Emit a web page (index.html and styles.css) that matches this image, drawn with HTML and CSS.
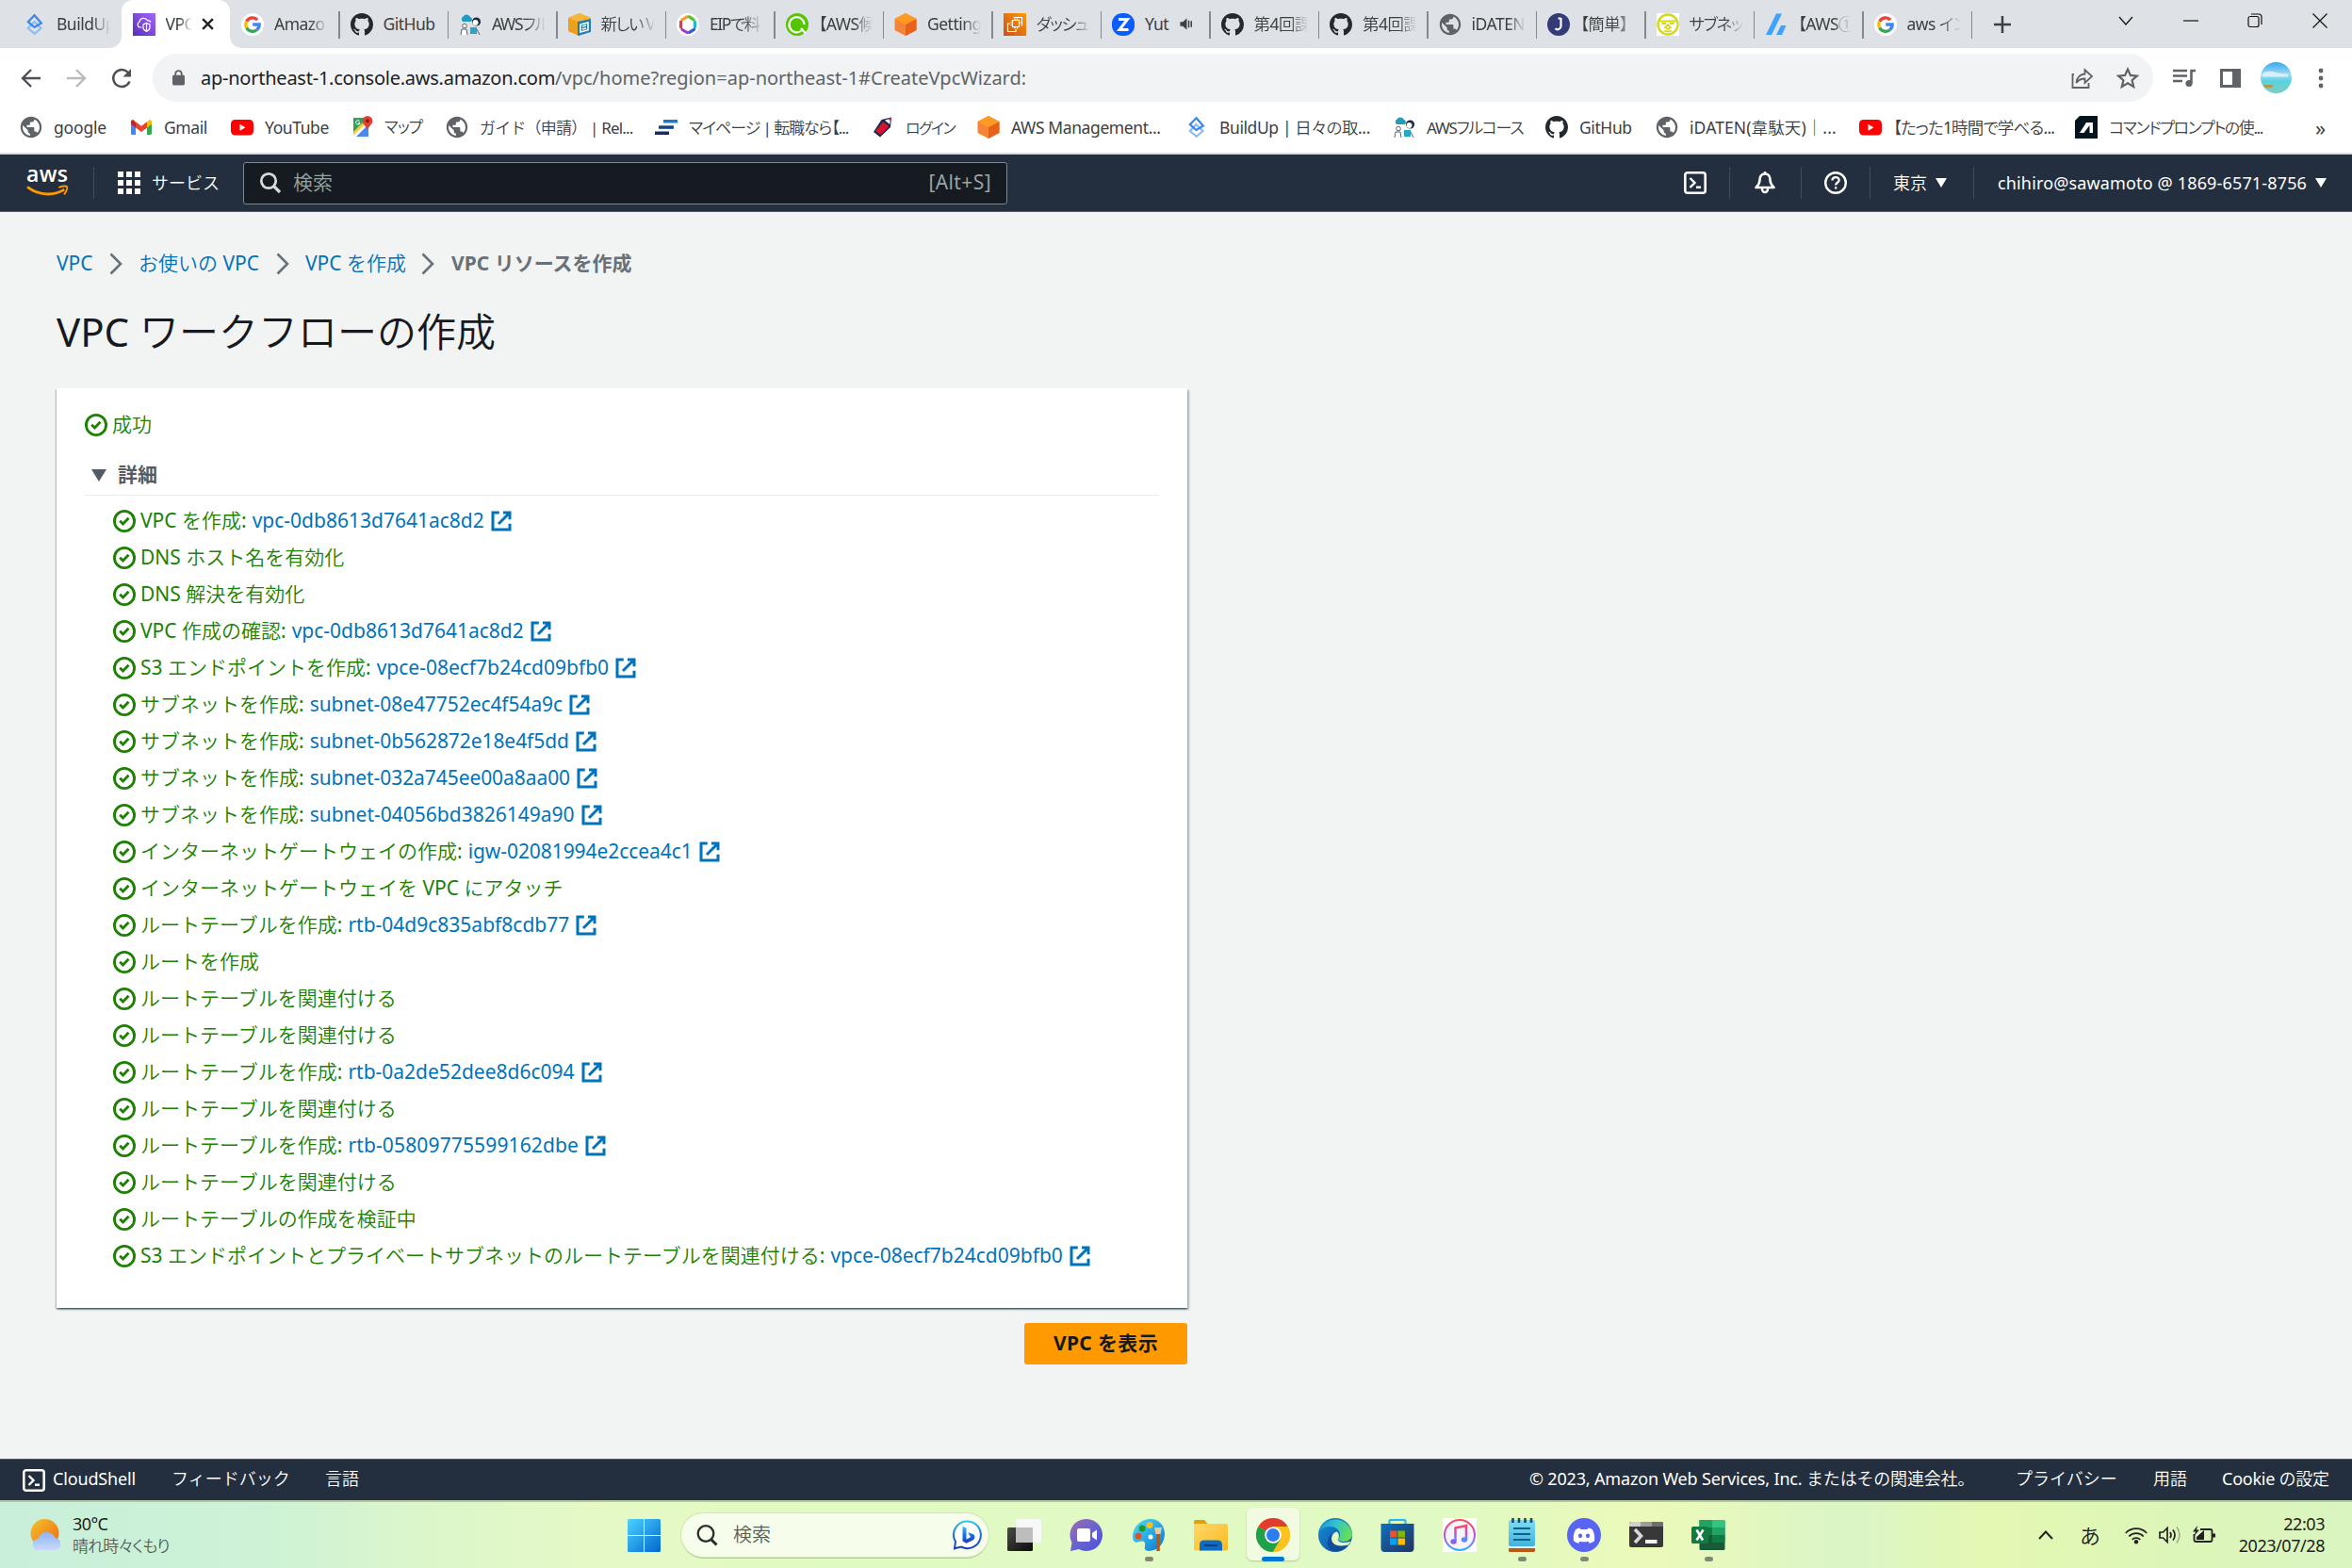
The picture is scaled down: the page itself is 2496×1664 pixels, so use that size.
FILE: index.html
```html
<!DOCTYPE html>
<html lang="ja">
<head>
<meta charset="utf-8">
<title>VPC リソースを作成</title>
<link rel="stylesheet" href="styles.css">
</head>
<body>
<svg class="defs" aria-hidden="true">
  <defs>
    <linearGradient id="gPurple" x1="0" y1="1" x2="1" y2="0"><stop offset="0" stop-color="#5a30b5"/><stop offset="1" stop-color="#a166ff"/></linearGradient>
    <linearGradient id="gOrange" x1="0" y1="1" x2="1" y2="0"><stop offset="0" stop-color="#c8511b"/><stop offset="1" stop-color="#ff9900"/></linearGradient>
    <linearGradient id="gWin" x1="0" y1="0" x2="1" y2="1"><stop offset="0" stop-color="#4ed3ff"/><stop offset="1" stop-color="#0067cf"/></linearGradient>
    <linearGradient id="gSun" x1="0" y1="0" x2="1" y2="1"><stop offset="0" stop-color="#f3c52c"/><stop offset="1" stop-color="#f2660f"/></linearGradient>
    <linearGradient id="gCloud" x1="0" y1="0" x2="0" y2="1"><stop offset="0" stop-color="#8db3f5"/><stop offset="1" stop-color="#c9dafa"/></linearGradient>
    <linearGradient id="gSky" x1="0" y1="0" x2="0" y2="1"><stop offset="0" stop-color="#2fa8ee"/><stop offset=".4" stop-color="#a5dcf5"/><stop offset=".6" stop-color="#58d3df"/><stop offset="1" stop-color="#7fcdbb"/></linearGradient>
    <linearGradient id="gBing" x1="0" y1="0" x2="0" y2="1"><stop offset="0" stop-color="#2ac8ee"/><stop offset=".5" stop-color="#1b6fe8"/><stop offset="1" stop-color="#1a3fae"/></linearGradient>
    <linearGradient id="gChat" x1="0" y1="0" x2="1" y2="1"><stop offset="0" stop-color="#a06bb0"/><stop offset=".5" stop-color="#6a63d0"/><stop offset="1" stop-color="#4b4fd8"/></linearGradient>
    <linearGradient id="gPaint" x1="0" y1="0" x2="1" y2="1"><stop offset="0" stop-color="#4fe0f8"/><stop offset="1" stop-color="#0a74d1"/></linearGradient>
    <linearGradient id="gFolder" x1="0" y1="0" x2="1" y2="1"><stop offset="0" stop-color="#ffd869"/><stop offset="1" stop-color="#fdb91f"/></linearGradient>
    <linearGradient id="gStore" x1="0" y1="0" x2="1" y2="1"><stop offset="0" stop-color="#0e6fbf"/><stop offset="1" stop-color="#24335c"/></linearGradient>
    <linearGradient id="gTunes" x1="0" y1="0" x2="0" y2="1"><stop offset="0" stop-color="#fb4a5c"/><stop offset=".55" stop-color="#b553e6"/><stop offset="1" stop-color="#2fb4f5"/></linearGradient>
    <linearGradient id="gPad" x1="0" y1="0" x2="0" y2="1"><stop offset="0" stop-color="#7fdcf5"/><stop offset="1" stop-color="#3fb4da"/></linearGradient>
    <linearGradient id="gEdge" x1="0" y1="0" x2="1" y2=".3"><stop offset="0" stop-color="#1b8fd8"/><stop offset=".5" stop-color="#2fc3cf"/><stop offset="1" stop-color="#62dd5c"/></linearGradient>
    <linearGradient id="gEdge2" x1="0" y1="0" x2="1" y2="1"><stop offset="0" stop-color="#1390dd"/><stop offset="1" stop-color="#0f4a96"/></linearGradient>
    <linearGradient id="gTv" x1="0" y1="0" x2="1" y2="1"><stop offset="0" stop-color="#4a4a4a"/><stop offset="1" stop-color="#0c0c0c"/></linearGradient>

    <symbol id="build" viewBox="0 0 24 24"><path d="M11.500 9l-6.700 7 7 5.800L18.500 16z" fill="none" stroke="#8bbcf4" stroke-width="2.200"/><path d="M11.500 2.200L4.800 9.200l6.700 5.800 7.300-4.500z" fill="none" stroke="#3b86ea" stroke-width="2.200"/></symbol>
    <symbol id="vpc" viewBox="0 0 24 24"><path d="M0 0h24v24H0z" fill="url(#gPurple)"/><path d="M9.500 15H7.500a3 3 0 0 1-.6-5.700 4.600 4.600 0 0 1 8.600-1.500 3 3 0 0 1 3.500 2" fill="none" stroke="#fff" stroke-width="1.200"/><path d="M14.500 10.500l3.500 1.400v3.300c0 2-1.500 3.300-3.500 4.200-2-.9-3.500-2.200-3.500-4.200v-3.300zM14.500 10.500v9" fill="none" stroke="#fff" stroke-width="1.200"/></symbol>
    <symbol id="google" viewBox="0 0 24 24"><circle cx="12" cy="12" r="12" fill="#fff"/><g fill="none" stroke-width="3.300"><path d="M17.200 7.200A7.200 7.200 0 0 0 5.700 8.600" stroke="#ea4335"/><path d="M5.700 8.600a7.300 7.300 0 0 0 0 6.800" stroke="#fbbc05"/><path d="M5.700 15.400a7.200 7.200 0 0 0 10.800 2.300" stroke="#34a853"/><path d="M16.500 17.700A7 7 0 0 0 19.200 12H12.200" stroke="#4285f4"/></g></symbol>
    <symbol id="github" viewBox="0 0 16 16"><path fill="#24292f" d="M8 0C3.580 0 0 3.580 0 8c0 3.540 2.290 6.530 5.470 7.590.4.070.55-.17.55-.38 0-.19-.01-.82-.01-1.490-2.010.37-2.530-.49-2.690-.94-.09-.23-.48-.94-.82-1.130-.28-.15-.68-.52-.01-.53.63-.01 1.080.58 1.230.82.72 1.210 1.870.87 2.330.66.070-.52.28-.87.51-1.070-1.780-.2-3.640-.89-3.640-3.950 0-.87.310-1.590.82-2.150-.08-.2-.36-1.020.08-2.120 0 0 .67-.21 2.200.82.640-.18 1.320-.27 2-.27s1.360.09 2 .27c1.530-1.040 2.200-.82 2.200-.82.44 1.100.16 1.920.08 2.120.51.560.82 1.270.82 2.150 0 3.070-1.870 3.750-3.650 3.950.29.250.54.730.54 1.480 0 1.070-.01 1.930-.01 2.200 0 .21.150.46.55.38A8.010 8.010 0 0 0 16 8c0-4.420-3.580-8-8-8z"/></symbol>
    <symbol id="course" viewBox="0 0 24 24"><path d="M4 9a3.400 3.400 0 0 1 .5-5.500A4.200 4.200 0 0 1 12 4a3 3 0 0 1 1 5z" fill="#1e9dbf"/><circle cx="18.500" cy="9" r="4.600" fill="#1d2b3c"/><circle cx="17.500" cy="10" r="3" fill="#fff"/><path d="M12 15h7v7h-7z" fill="#25a7cc"/><circle cx="6" cy="13.500" r="2.300" fill="#fff" stroke="#56626e"/><path d="M2 23l1-6h5l1 6M19 17l3 6" fill="#fff" stroke="#56626e"/></symbol>
    <symbol id="box" viewBox="0 0 24 24"><path d="M0 5L12 0l12 5v14l-12 5L0 19z" fill="#f3a51f"/><path d="M0 5l12 5v14L0 19z" fill="#eda01c"/><path d="M0 5L12 0l12 5-12 4.500z" fill="#f7b53b"/><path d="M10 9l14-3v14l-14 4z" fill="#1d7fb5"/><path d="M13 12l8-2v8l-8 2zM15 14l4-1M15 17l4-1" fill="none" stroke="#fff" stroke-width="1.600"/></symbol>
    <symbol id="hex" viewBox="0 0 24 24"><circle cx="12" cy="12" r="12" fill="#fff"/><g fill="none" stroke-width="3.200" stroke-linecap="round"><path d="M11 3.800L6 7" stroke="#f4a020"/><path d="M4.600 9v6" stroke="#e8384f"/><path d="M6 17.500l5 3" stroke="#a637c8"/><path d="M13.500 20.300l5-3" stroke="#3355e0"/><path d="M19.400 15V9" stroke="#23b5d8"/><path d="M18 6.800l-4.500-3" stroke="#58c322"/></g></symbol>
    <symbol id="qiita" viewBox="0 0 24 24"><circle cx="12" cy="12" r="12" fill="#55c500"/><path d="M16.500 18.500A8 8 0 1 1 19.500 12" fill="none" stroke="#fff" stroke-width="2.200"/><circle cx="12" cy="10.500" r="4.200" fill="#55c500"/><path d="M16 16l5 5.500" stroke="#fff" stroke-width="2.500"/></symbol>
    <symbol id="cube" viewBox="0 0 24 24"><path d="M12 0l11.500 6v12L12 24 .500 18V6z" fill="#f58536"/><path d="M12 12l11.500-6v12L12 24z" fill="#e8601c"/><path d="M12 0l11.500 6L12 12 .500 6z" fill="#ff9a22"/></symbol>
    <symbol id="ec2" viewBox="0 0 24 24"><path d="M0 0h24v24H0z" fill="url(#gOrange)"/><path d="M9.500 7.500h7v7h-7zM12 5.500v2M14.500 5.500v2M12 14.500v2M14.500 14.500v2M7.500 10h2M7.500 12.500h2M16.500 10h2M10.500 4.500h9v9M7 11H4.500v8.500H13V17" fill="none" stroke="#fff" stroke-width="1.200"/></symbol>
    <symbol id="zoomz" viewBox="0 0 24 24"><rect width="24" height="24" rx="11" fill="#0b5cff"/><path d="M7 6.500h9.500L8 17.500h9.500" fill="none" stroke="#fff" stroke-width="3"/></symbol>
    <symbol id="globe" viewBox="1.300 1.300 21.400 21.400"><path fill="#5f6368" d="M12 2C6.480 2 2 6.480 2 12s4.480 10 10 10 10-4.480 10-10S17.520 2 12 2zm-1 17.930c-3.950-.49-7-3.850-7-7.930 0-.62.080-1.210.21-1.790L9 15v1c0 1.100.9 2 2 2v1.930zm6.900-2.540c-.26-.81-1-1.390-1.900-1.390h-1v-3c0-.55-.45-1-1-1H8v-2h2c.55 0 1-.45 1-1V7h2c1.100 0 2-.9 2-2v-.41c2.930 1.190 5 4.060 5 7.410 0 2.080-.8 3.970-2.100 5.390z"/></symbol>
    <symbol id="jj" viewBox="0 0 24 24"><circle cx="12" cy="12" r="12" fill="#343b78"/><path d="M14.500 5v9a3.500 3.500 0 0 1-6 2.200M11.500 5.500h3" fill="none" stroke="#fff" stroke-width="2.200"/></symbol>
    <symbol id="face" viewBox="0 0 24 24"><path d="M0 0h24v24H0z" fill="#fff"/><circle cx="12" cy="12" r="10.500" fill="#fff" stroke="#d4d817" stroke-width="2.400"/><path d="M3.500 8.500h17M5.500 11h4.500M14 11h4.500M12 12l-3 3 3 2 3-2zM8 18.500q4 2 8 0" fill="none" stroke="#d4d817" stroke-width="1.800"/></symbol>
    <symbol id="slash" viewBox="0 0 24 24"><path d="M1 23L12 .5h6L7 23zM12 23l5-10h5.500L18 23z" fill="#3ea2ff"/></symbol>
    <symbol id="gmail" viewBox="0 0 24 24"><path d="M1 5.500v13A1.500 1.500 0 0 0 2.500 20H6V9z" fill="#4285f4"/><path d="M18 9v11h3.500a1.500 1.500 0 0 0 1.500-1.500v-13z" fill="#34a853"/><path d="M1 6v2.500l5 4V7L4 4.500C2.500 4 1 4.500 1 6z" fill="#c5221f"/><path d="M23 6v2.500l-5 4V7l2-2.500c1.500-.5 3 0 3 1.500z" fill="#fbbc04"/><path d="M6 6.200l6 4.600 6-4.600v6.300L12 17l-6-4.500z" fill="#ea4335"/></symbol>
    <symbol id="yt" viewBox="0 0 24 24"><rect y="4" width="24" height="16.500" rx="4.500" fill="#f00"/><path d="M9.500 8.800v7l6-3.500z" fill="#fff"/></symbol>
    <symbol id="maps" viewBox="0 0 24 24"><path d="M3 2h12l4 10v10H3z" fill="#2ea45a"/><path d="M3 22L19 6v16z" fill="#4d88ea"/><path d="M3 19L16 6l3 3L6 22H3z" fill="#fff"/><path d="M3 17L15 5l2 2L3 21z" fill="#fcc934"/><path d="M18 0a5.300 5.300 0 0 0-5.300 5.300c0 3.700 3.500 5 5.300 9.700 1.800-4.700 5.300-6 5.300-9.700A5.300 5.300 0 0 0 18 0z" fill="#e04033"/><circle cx="18" cy="5.300" r="2" fill="#8c1c14"/><path d="M9.500 5.500a2.200 2.200 0 1 0 .5 2H8" fill="none" stroke="#fff"/></symbol>
    <symbol id="bars" viewBox="0 0 24 24"><path d="M9 4h15v3.500H9z" fill="#1c79c4"/><path d="M4 10.300h16v3.500H4z" fill="#16448a"/><path d="M0 16.500h15V20H0z" fill="#1d2a5c"/></symbol>
    <symbol id="pencil" viewBox="0 0 24 24"><path d="M21 1.500L20 12 9 22.500l-7-5.500L10.500 4z" fill="#18294d"/><path d="M12 6.500l6.500 4.500-9 9L4 16z" fill="#d8142c"/><path d="M14 4.800l6-2.300-.7 6.500z" fill="#fff"/><path d="M17.500 3.500L20 2.500l-.4 2.700z" fill="#d8142c"/></symbol>
    <symbol id="alogo" viewBox="0 0 24 24"><path d="M5 0h19v24H0V5z" fill="#04151f"/><path d="M5 18l7-11h7v11h-3.500V10l-6 8z" fill="#fff"/></symbol>

    <symbol id="shell" viewBox="0 0 24 24"><rect x="1.300" y="1.300" width="21.400" height="21.400" rx="2.500" fill="none" stroke="#fff" stroke-width="2.600"/><path d="M6.500 7l5 5-5 5M13 16.800h5" fill="none" stroke="#fff" stroke-width="2.400"/></symbol>
    <symbol id="check" viewBox="0 0 16 16"><g fill="none" stroke="#1d8102" stroke-width="1.900"><circle cx="8" cy="8" r="7.050"/><path d="M4.800 7.800l2.200 2.200 4-4.100"/></g></symbol>
    <symbol id="ext" viewBox="0 0 16 16"><path d="M6.500 2H2v12h12V9.800M9.300 2H14v4.800M6 10l7.800-7.800" fill="none" stroke="#0073bb" stroke-width="2"/></symbol>
    <symbol id="chev" viewBox="0 0 14 24"><path d="M1.500 1.500l10.500 10.500-10.500 10.500" fill="none" stroke="#687078" stroke-width="2.600"/></symbol>
  </defs>
</svg>

<div class="tabs">
  <div class="tab"><svg><use href="#build"/></svg><span>BuildUp</span></div>
  <div class="tab active"><svg><use href="#vpc"/></svg><span>VPC</span><svg class="close" viewBox="0 0 14 14"><path d="M2 2l10 10M12 2L2 12" stroke="#202124" stroke-width="2.200"/></svg></div>
  <div class="tab"><svg><use href="#google"/></svg><span>Amazo</span></div>
  <div class="tab"><svg><use href="#github"/></svg><span>GitHub</span></div>
  <div class="tab kana"><svg><use href="#course"/></svg><span>AWSフル</span></div>
  <div class="tab kana"><svg><use href="#box"/></svg><span>新しい V</span></div>
  <div class="tab kana"><svg><use href="#hex"/></svg><span>EIPで料</span></div>
  <div class="tab"><svg><use href="#qiita"/></svg><span>【AWS候</span></div>
  <div class="tab"><svg><use href="#cube"/></svg><span>Getting</span></div>
  <div class="tab kana"><svg><use href="#ec2"/></svg><span>ダッシュボ</span></div>
  <div class="tab audio"><svg><use href="#zoomz"/></svg><span>Yut</span><svg class="snd" viewBox="0 0 16 16"><path d="M1 5.500h3L8.500 1.500v13L4 10.500H1z" fill="#3c4043"/><path d="M10.700 4v8M13.600 4.500v7" stroke="#3c4043" stroke-width="1.600"/></svg></div>
  <div class="tab"><svg><use href="#github"/></svg><span>第4回課</span></div>
  <div class="tab"><svg><use href="#github"/></svg><span>第4回課</span></div>
  <div class="tab"><svg><use href="#globe"/></svg><span>iDATEN</span></div>
  <div class="tab"><svg><use href="#jj"/></svg><span>【簡単】</span></div>
  <div class="tab kana"><svg><use href="#face"/></svg><span>サブネッ</span></div>
  <div class="tab"><svg><use href="#slash"/></svg><span>【AWS①</span></div>
  <div class="tab"><svg><use href="#google"/></svg><span>aws イン</span></div>
  <svg class="plus" viewBox="0 0 18 18"><path d="M9 0v18M0 9h18" stroke="#3c4043" stroke-width="2.500"/></svg>
  <div class="winctl">
    <svg viewBox="0 0 16 16"><path d="M1 4l7 8 7-8" /></svg>
    <svg viewBox="0 0 16 16"><path d="M0 8h16"/></svg>
    <svg viewBox="0 0 16 16"><rect x="1" y="3.500" width="11" height="11" rx="2"/><path d="M4 1h8a3 3 0 0 1 3 3v8"/></svg>
    <svg viewBox="0 0 16 16"><path d="M.5.5l15 15M15.500.5l-15 15"/></svg>
  </div>
</div>

<div class="toolbar">
  <svg class="tb" viewBox="0 0 24 24"><path d="M22 12H3.500M12 3L3 12l9 9" fill="none" stroke="#4d5156" stroke-width="2.400"/></svg>
  <svg class="tb" viewBox="0 0 24 24"><path d="M2 12h18.500M12 3l9 9-9 9" fill="none" stroke="#b8babd" stroke-width="2.400"/></svg>
  <svg class="tb" viewBox="0 0 24 24"><path d="M20.500 15.500A9 9 0 1 1 18.500 5.500L21 8" fill="none" stroke="#4d5156" stroke-width="2.400"/><path d="M22 2v8.500h-8.500z" fill="#4d5156"/></svg>
  <div class="omni">
    <svg class="lock" viewBox="0 0 14 18"><rect y="6" width="14" height="11.500" rx="1.500" fill="#5f6368"/><path d="M3.500 7V4.500a3.500 3.500 0 0 1 7 0V7" fill="none" stroke="#5f6368" stroke-width="2"/></svg>
    <span class="url"><b>ap-northeast-1.console.aws.amazon.com</b>/vpc/home?region=ap-northeast-1#CreateVpcWizard:</span>
    <svg class="tb" viewBox="0 0 24 24"><path d="M3 8H1.500v14h17v-5" fill="none" stroke="#5f6368" stroke-width="1.800"/><path d="M5.500 17C6 11 9 8 14.500 7.500V3l7.500 7-7.500 7v-4.500c-4 0-7 1.500-9 4.500z" fill="none" stroke="#5f6368" stroke-width="1.800"/></svg>
    <svg class="tb star" viewBox="0 0 24 24"><path d="M12 2.500l2.900 6.400 7 .7-5.300 4.600 1.600 6.800-6.200-3.700L5.800 21l1.600-6.800L2.100 9.600l7-.7z" fill="none" stroke="#5f6368" stroke-width="2.200"/></svg>
  </div>
  <svg class="tb media" viewBox="0 0 24 24"><path d="M0 4h15M0 9.500h15M0 15h10" stroke="#5f6368" stroke-width="2.400"/><path d="M24 4h-4.500v13" fill="none" stroke="#5f6368" stroke-width="2.600"/><circle cx="17" cy="17.500" r="3.600" fill="#5f6368"/></svg>
  <svg class="tb panel" viewBox="0 0 22 22"><path d="M0 1h22v20H0zM3 4v14h10V4z" fill="#5f6368" fill-rule="evenodd"/></svg>
  <svg class="avatar" viewBox="0 0 32 32"><circle cx="16" cy="16" r="16" fill="url(#gSky)"/><path d="M3 11q6-3 11-1t14 2v3H1z" fill="#e6f4fb" opacity=".8"/><path d="M3 23.500h10l-1.500 2.500h-7z" fill="#c78a33"/></svg>
  <svg class="dots" viewBox="0 0 6 22"><g fill="#5f6368"><circle cx="3" cy="3" r="2.400"/><circle cx="3" cy="11" r="2.400"/><circle cx="3" cy="19" r="2.400"/></g></svg>
</div>

<div class="bookmarks">
  <div class="bm"><svg><use href="#globe"/></svg><span>google</span></div>
  <div class="bm"><svg><use href="#gmail"/></svg><span>Gmail</span></div>
  <div class="bm"><svg><use href="#yt"/></svg><span>YouTube</span></div>
  <div class="bm"><svg><use href="#maps"/></svg><span>マップ</span></div>
  <div class="bm"><svg><use href="#globe"/></svg><span>ガイド（申請） | Rel...</span></div>
  <div class="bm"><svg><use href="#bars"/></svg><span>マイページ | 転職なら【...</span></div>
  <div class="bm"><svg><use href="#pencil"/></svg><span>ログイン</span></div>
  <div class="bm"><svg><use href="#cube"/></svg><span>AWS Management...</span></div>
  <div class="bm"><svg><use href="#build"/></svg><span>BuildUp | 日々の取...</span></div>
  <div class="bm"><svg><use href="#course"/></svg><span>AWSフルコース</span></div>
  <div class="bm"><svg><use href="#github"/></svg><span>GitHub</span></div>
  <div class="bm"><svg><use href="#globe"/></svg><span>iDATEN(韋駄天)｜...</span></div>
  <div class="bm"><svg><use href="#yt"/></svg><span>【たった1時間で学べる...</span></div>
  <div class="bm"><svg><use href="#alogo"/></svg><span>コマンドプロンプトの使...</span></div>
  <div class="more">»</div>
</div>

<header class="nav">
  <div class="logo"><span>aws</span><svg viewBox="0 0 48 16"><path d="M1 2.500C14 12.500 31 13 43 5.500" fill="none" stroke="#f90" stroke-width="3"/><path d="M36.500 3.200c4-2 9-2 9.500-.7s-.5 5.500-3.500 8.500" fill="none" stroke="#f90" stroke-width="2"/></svg></div>
  <div class="services"><svg viewBox="0 0 24 24"><path fill="#fff" d="M0 0h6v6H0zM9 0h6v6H9zM18 0h6v6h-6zM0 9h6v6H0zM9 9h6v6H9zM18 9h6v6h-6zM0 18h6v6H0zM9 18h6v6H9zM18 18h6v6h-6z"/></svg><span>サービス</span></div>
  <div class="search"><svg viewBox="0 0 24 24"><circle cx="10" cy="10" r="7.700" fill="none" stroke="#d5dbdb" stroke-width="2.800"/><path d="M15.500 15.500l6.500 6.500" stroke="#d5dbdb" stroke-width="3.200"/></svg><span>検索</span><em>[Alt+S]</em></div>
  <div class="navr">
    <div class="n1"><svg><use href="#shell"/></svg></div>
    <div class="n2"><svg viewBox="0 0 24 24"><path d="M12 2.500c-4 0-5.500 3-5.500 6.500 0 4-1.500 5.500-4 8h19c-2.500-2.500-4-4-4-8 0-3.500-1.500-6.500-5.500-6.500z" fill="none" stroke="#fff" stroke-width="2.600" stroke-linejoin="round"/><path d="M12 0v3M9 17.500v1.500a3 3 0 0 0 6 0v-1.500" fill="none" stroke="#fff" stroke-width="2.400"/></svg></div>
    <div class="n3"><svg viewBox="0 0 24 24"><circle cx="12" cy="12" r="10.800" fill="none" stroke="#fff" stroke-width="2.400"/><path d="M8.500 9.500c0-4.500 7.200-4.500 7.200-.3 0 2.600-3.600 2.600-3.600 5.300" fill="none" stroke="#fff" stroke-width="2.300"/><path d="M11 16.200h2.300v2.300H11z" fill="#fff"/></svg></div>
    <div class="n4"><span>東京</span><i class="tri"></i></div>
    <div class="n5"><span>chihiro@sawamoto @ 1869-6571-8756</span><i class="tri"></i></div>
  </div>
</header>

<main>
  <nav class="crumbs"><a class="c1">VPC</a><svg><use href="#chev"/></svg><a class="c2">お使いの VPC</a><svg><use href="#chev"/></svg><a class="c3">VPC を作成</a><svg><use href="#chev"/></svg><b class="c4">VPC リソースを作成</b></nav>
  <h1><span>VPC ワークフローの作成</span></h1>
  <section class="card">
    <p class="ok"><svg><use href="#check"/></svg><span>成功</span></p>
    <h2><i class="tri"></i><span>詳細</span></h2>
    <ul>
      <li><svg><use href="#check"/></svg><span class="p">VPC を作成:</span><a>vpc-0db8613d7641ac8d2</a><svg><use href="#ext"/></svg></li>
      <li><svg><use href="#check"/></svg><span class="p">DNS ホスト名を有効化</span></li>
      <li><svg><use href="#check"/></svg><span class="p">DNS 解決を有効化</span></li>
      <li><svg><use href="#check"/></svg><span class="p">VPC 作成の確認:</span><a>vpc-0db8613d7641ac8d2</a><svg><use href="#ext"/></svg></li>
      <li><svg><use href="#check"/></svg><span class="p">S3 エンドポイントを作成:</span><a>vpce-08ecf7b24cd09bfb0</a><svg><use href="#ext"/></svg></li>
      <li class="tight"><svg><use href="#check"/></svg><span class="p">サブネットを作成:</span><a>subnet-08e47752ec4f54a9c</a><svg><use href="#ext"/></svg></li>
      <li class="tight"><svg><use href="#check"/></svg><span class="p">サブネットを作成:</span><a>subnet-0b562872e18e4f5dd</a><svg><use href="#ext"/></svg></li>
      <li class="tight"><svg><use href="#check"/></svg><span class="p">サブネットを作成:</span><a>subnet-032a745ee00a8aa00</a><svg><use href="#ext"/></svg></li>
      <li><svg><use href="#check"/></svg><span class="p">サブネットを作成:</span><a>subnet-04056bd3826149a90</a><svg><use href="#ext"/></svg></li>
      <li class="tight"><svg><use href="#check"/></svg><span class="p">インターネットゲートウェイの作成:</span><a>igw-02081994e2ccea4c1</a><svg><use href="#ext"/></svg></li>
      <li><svg><use href="#check"/></svg><span class="p">インターネットゲートウェイを VPC にアタッチ</span></li>
      <li><svg><use href="#check"/></svg><span class="p">ルートテーブルを作成:</span><a>rtb-04d9c835abf8cdb77</a><svg><use href="#ext"/></svg></li>
      <li><svg><use href="#check"/></svg><span class="p">ルートを作成</span></li>
      <li><svg><use href="#check"/></svg><span class="p">ルートテーブルを関連付ける</span></li>
      <li><svg><use href="#check"/></svg><span class="p">ルートテーブルを関連付ける</span></li>
      <li><svg><use href="#check"/></svg><span class="p">ルートテーブルを作成:</span><a>rtb-0a2de52dee8d6c094</a><svg><use href="#ext"/></svg></li>
      <li><svg><use href="#check"/></svg><span class="p">ルートテーブルを関連付ける</span></li>
      <li class="loose"><svg><use href="#check"/></svg><span class="p">ルートテーブルを作成:</span><a>rtb-05809775599162dbe</a><svg><use href="#ext"/></svg></li>
      <li><svg><use href="#check"/></svg><span class="p">ルートテーブルを関連付ける</span></li>
      <li><svg><use href="#check"/></svg><span class="p">ルートテーブルの作成を検証中</span></li>
      <li><svg><use href="#check"/></svg><span class="p">S3 エンドポイントとプライベートサブネットのルートテーブルを関連付ける:</span><a>vpce-08ecf7b24cd09bfb0</a><svg><use href="#ext"/></svg></li>
    </ul>
  </section>
  <div class="actions"><button><span>VPC を表示</span></button></div>
</main>

<footer class="foot">
  <svg><use href="#shell"/></svg><span class="f1">CloudShell</span><span class="f2">フィードバック</span><span class="f3">言語</span>
  <span class="f4">© 2023, Amazon Web Services, Inc. またはその関連会社。</span><span class="f5">プライバシー</span><span class="f6">用語</span><span class="f7">Cookie の設定</span>
</footer>

<div class="taskbar">
  <div class="weather">
    <svg viewBox="0 0 34 34"><circle cx="15.500" cy="15" r="15" fill="url(#gSun)"/><path d="M9 33a6 6 0 0 1-.5-12 9.500 9.500 0 0 1 18-1A6.600 6.600 0 0 1 27 33z" fill="url(#gCloud)"/></svg>
    <div><span class="w1">30°C</span><span class="w2">晴れ時々くもり</span></div>
  </div>
  <svg class="start" viewBox="0 0 35 35"><path d="M0 1.500Q0 0 1.500 0H17v17H0zM18 0h15.500Q35 0 35 1.500V17H18zM0 18h17v17H1.500Q0 35 0 33.500zM18 18h17v15.500Q35 35 33.500 35H18z" fill="url(#gWin)"/></svg>
  <div class="tsearch"><svg class="mag" viewBox="0 0 24 24"><circle cx="11" cy="10.500" r="8.300" fill="none" stroke="#2b2b2b" stroke-width="2.300"/><path d="M16.500 16.500l6 6" stroke="#2b2b2b" stroke-width="3"/></svg><span>検索</span><svg class="bing" viewBox="0 0 32 32"><path d="M16 1.500A14.300 14.300 0 1 1 9 28.500L2 30.300 3 23A14.300 14.300 0 0 1 16 1.500z" fill="#fff" stroke="url(#gBing)" stroke-width="2"/><path d="M10.500 7l4 1.500v12l4.500-2.300-2.800-5.200 6.300 2.500c1.800 2.500.8 4.800-1 6l-7 3.300-4-2.300z" fill="url(#gBing)"/></svg></div>
  <div class="apps">
    <div><svg viewBox="0 0 36 36"><rect x="0" y="10" width="27" height="25" rx="1.500" fill="url(#gTv)"/><rect x="9" y="1" width="27" height="25" rx="1.500" fill="#f7f7f7"/><path d="M9 10h18v16H10.500Q9 26 9 24.500z" fill="#bdbdbd"/></svg></div>
    <div><svg viewBox="0 0 36 36"><path d="M18 1a17 17 0 1 1-8 32l-9 2 1.500-9A17 17 0 0 1 18 1z" fill="url(#gChat)"/><rect x="8" y="11" width="14" height="14" rx="2" fill="#fff"/><path d="M24 16l5-3.500v11L24 20z" fill="#fff"/></svg></div>
    <div class="run"><svg viewBox="0 0 36 36"><path d="M20 1C9 1 1 10 1 20c0 5 3 7 7 5 4-1.500 7 0 6 4-.7 3 0 6 4 6 10 0 17-9 17-18C35 7 28 1 20 1z" fill="url(#gPaint)"/><circle cx="11" cy="11" r="3.500" fill="#1a9a23"/><circle cx="19" cy="7.500" r="3.500" fill="#f8c01c"/><circle cx="7" cy="19" r="3.500" fill="#e0502a"/><circle cx="20" cy="20" r="2.500" fill="#fff"/><path d="M24 10h8l-1.500 7h-5z" fill="#ecc7a4"/><path d="M26.300 17h3.500v18h-3.500z" fill="#b35a17"/></svg></div>
    <div><svg viewBox="0 0 36 36"><path d="M0 4q0-2 2-2h9l4 4.500h-15z" fill="#e2a006"/><rect y="6" width="36" height="28.500" rx="2" fill="url(#gFolder)"/><path d="M6 34.500v-6q0-5 5-5h14q5 0 5 5v6z" fill="#0f6cc0"/><path d="M11 29h14" stroke="#0a3e82" stroke-width="2"/></svg></div>
    <div class="cur"><svg viewBox="0 0 36 36"><circle cx="18" cy="18" r="18" fill="#fcc31e"/><path d="M18 18L2.400 9A18 18 0 0 1 33.600 9z" fill="#e33b2e"/><path d="M2.400 9A18 18 0 0 0 18 36l8-13.500-8-4.500z" fill="#1fa04a"/><path d="M33.600 9H18v9l8 4.500L18 36A18 18 0 0 0 33.600 9z" fill="#fcc31e"/><circle cx="18" cy="18" r="8.800" fill="#fff"/><circle cx="18" cy="18" r="7" fill="#2f7cf0"/></svg></div>
    <div><svg viewBox="0 0 36 36"><circle cx="18" cy="18" r="18" fill="url(#gEdge2)"/><path d="M1 14A18 18 0 0 1 36 17c0 5-4 8-9 8-3.500 0-6-1-5.500-3 2.500-2.500 2-8-2-11S6 8 1 14z" fill="url(#gEdge)"/><path d="M14 23c0-5 3-8 6-8.500 2 2 2.500 5 1.300 7.500-1 2.500 2 4 6 4 3.500 0 5.700-.8 7-1.500-.5 1-1.500 3-3 4.500C24 31 14 30 14 23z" fill="#e3f8c2"/><path d="M14 22c0 7 9 9 17 6.500-4 5.500-10 7.500-15 6.500C8 32 8 24 14 16z" fill="#104e9c"/></svg></div>
    <div><svg viewBox="0 0 36 36"><path d="M9.500 8V3q0-1 1-1h15q1 0 1 1v5" fill="none" stroke="#25b9f2" stroke-width="2.200"/><path d="M.500 6h35v26q0 4-4 4h-27q-4 0-4-4z" fill="url(#gStore)"/><path d="M10 13.500h7.500v7H10z" fill="#f25022"/><path d="M18.500 13.500H26v7h-7.500z" fill="#7fba00"/><path d="M10 21.500h7.500v7H10z" fill="#00a4ef"/><path d="M18.500 21.500H26v7h-7.500z" fill="#ffb900"/></svg></div>
    <div><svg viewBox="0 0 36 36"><path d="M0 0h36v36H0z" fill="#fff"/><circle cx="18" cy="18" r="16" fill="#f6f3fb" stroke="url(#gTunes)" stroke-width="2"/><path d="M13.500 25V10.500L25 8v15" fill="none" stroke="url(#gTunes)" stroke-width="2.500"/><ellipse cx="11.500" cy="25" rx="3.200" ry="2.800" fill="#8a5cf0"/><ellipse cx="23" cy="23" rx="3.200" ry="2.800" fill="#5f8af5"/></svg></div>
    <div class="run"><svg viewBox="0 0 36 36"><path d="M4 30h28v4.500q0 1.500-1.500 1.500h-25Q4 36 4 34.500z" fill="#b85b12"/><path d="M4 27h28v5H4z" fill="#f3f3f3"/><rect x="4" y="2" width="28" height="28" rx="2" fill="url(#gPad)"/><path d="M9 11h18M9 17h18M9 23h18" stroke="#0c5f88" stroke-width="2"/><path d="M8.500 0v5M15 0v5M21.500 0v5M28 0v5" stroke="#10506e" stroke-width="2.600"/></svg></div>
    <div class="run"><svg viewBox="0 0 36 36"><circle cx="18" cy="18" r="18" fill="#5865f2"/><path d="M13.500 10.500c-2 .3-3.500 1-4.500 1.800-2 4-2.700 8-2 12 2 1.500 3.800 2.200 5.300 2.500l1.200-2.100c3 .8 6 .8 9 0l1.200 2.100c1.500-.3 3.300-1 5.300-2.500.7-4 0-8-2-12-1-.8-2.500-1.500-4.500-1.800l-.9 1.500h-7.200z" fill="#fff"/><ellipse cx="14" cy="18.800" rx="2.100" ry="2.400" fill="#5865f2"/><ellipse cx="22" cy="18.800" rx="2.100" ry="2.400" fill="#5865f2"/></svg></div>
    <div><svg viewBox="0 0 36 36"><path d="M0 6q0-2 2-2h32q2 0 2 2v23q0 2-2 2H2q-2 0-2-2z" fill="#383838"/><path d="M0 9V6q0-2 2-2h10v5z" fill="#cfcfcf"/><path d="M12 4h12v5H12z" fill="#9d9d9d"/><path d="M24 4h10q2 0 2 2v3H24z" fill="#6e6e6e"/><path d="M6 12l6.500 7L6 26" fill="none" stroke="#d8d8d8" stroke-width="3.600"/><path d="M17 23h12.500v4H17z" fill="#f2f2f2"/></svg></div>
    <div class="run"><svg viewBox="0 0 36 36"><path d="M8.500 2H34q1.500 0 1.500 1.500v29Q35.500 34 34 34H10q-1.500 0-1.500-1.500z" fill="#185c37"/><path d="M8.500 2H22v8H8.500z" fill="#21a366"/><path d="M22 2h12q1.500 0 1.500 1.500V10H22z" fill="#33c481"/><path d="M8.500 10H22v8H8.500z" fill="#107c41"/><path d="M22 10h13.500v8H22z" fill="#21a366"/><path d="M22 18h13.500v8H22z" fill="#107c41"/><rect y="9" width="18" height="18" rx="1.500" fill="#107c41"/><path d="M5.500 12.500l6.500 11M12.500 12.500l-7 11" stroke="#fff" stroke-width="2.500"/></svg></div>
  </div>
  <div class="tray">
    <svg class="caret" viewBox="0 0 16 12"><path d="M1 10l7-7.500L15 10" fill="none" stroke="#222" stroke-width="2"/></svg>
    <span class="ime">あ</span>
    <svg class="wifi" viewBox="0 0 24 20"><g fill="none" stroke="#222" stroke-width="1.700"><path d="M.800 8a15.500 15.500 0 0 1 22.400 0M4.200 11.500a10.800 10.800 0 0 1 15.600 0M7.700 14.800a6.300 6.300 0 0 1 8.600 0"/></g><circle cx="12" cy="17.200" r="2.200" fill="#222"/></svg>
    <svg class="vol" viewBox="0 0 24 20"><path d="M1 7h3.500L9 2.500v15L4.500 13H1z" fill="none" stroke="#222" stroke-width="1.700"/><path d="M12 7q2 3 0 6M15 4.500q4 5.500 0 11" fill="none" stroke="#222" stroke-width="1.700"/><path d="M19 1.500q6 8.500 0 17" fill="none" stroke="#222" stroke-width="1.500" opacity=".35"/></svg>
    <svg class="bat" viewBox="0 0 24 20"><path d="M8 4h10.500q2 0 2 2v9q0 2-2 2H3.500q-2 0-2-2V9" fill="none" stroke="#222" stroke-width="1.800"/><path d="M4 15V12l8-7v10zM21 8.500h3v4h-3z" fill="#222"/><path d="M5 0L0 6.500h3L1.500 11 7 4.500H4z" fill="#222"/></svg>
    <div class="clock"><span class="k1">22:03</span><span class="k2">2023/07/28</span></div>
  </div>
</div>
</body>
</html>
```

FILE: styles.css
```css
* { box-sizing: border-box; }
body {
  margin: 0;
  width: 2496px;
  height: 1664px;
  overflow: hidden;
  display: flex;
  flex-direction: column;
  background: #f2f3f3;
  font-family: "Noto Sans", "Noto Sans CJK JP DemiLight", "Noto Sans CJK JP Light", "Noto Sans CJK JP", sans-serif;
  font-size: 21px;
  line-height: 1.5;
  color: #16191f;
}
svg { display: block; flex: none; }
.defs { position: absolute; width: 0; height: 0; }
span, a, b, em, button { white-space: nowrap; }
p, h1, h2, ul { margin: 0; padding: 0; font-weight: 400; }

/* tab strip */
.tabs {
  flex: none;
  height: 51px;
  padding-left: 13px;
  background: #dee1e6;
  display: flex;
  align-items: center;
}
.tab {
  position: relative;
  flex: none;
  width: 115.5px;
  height: 51px;
  padding-left: 12px;
  display: flex;
  align-items: center;
  font-size: 17.5px;
  color: #3c4043;
}
.tab > svg { width: 24px; height: 24px; }
.tab span {
  margin-left: 11px;
  letter-spacing: -0.5px;
  font-feature-settings: "palt";
  -webkit-mask-image: linear-gradient(90deg, #000 38px, transparent 57px);
  mask-image: linear-gradient(90deg, #000 38px, transparent 57px);
}
.tab.kana span { letter-spacing: -1.4px; }
.tab:nth-child(n+3)::after {
  content: "";
  position: absolute;
  right: -1px;
  top: 12px;
  width: 1.5px;
  height: 29px;
  background: #85888c;
}
.tab:nth-child(4) span { -webkit-mask-image: none; mask-image: none; }
.tab.active { background: #fff; border-radius: 12px 12px 0 0; }
.tab.active::before {
  content: "";
  position: absolute;
  left: -12px;
  right: -12px;
  bottom: 0;
  height: 12px;
  background:
    radial-gradient(circle at 0 0, transparent 11.5px, #fff 12px) left / 12px 12px no-repeat,
    radial-gradient(circle at 100% 0, transparent 11.5px, #fff 12px) right / 12px 12px no-repeat;
}
.tab.active span {
  width: 31px;
  -webkit-mask-image: linear-gradient(90deg, #000 14px, transparent 28px);
  mask-image: linear-gradient(90deg, #000 14px, transparent 28px);
}
.tab.audio span { width: 27px; -webkit-mask-image: none; mask-image: none; }
.tab > .close { width: 15px; height: 15px; margin-left: 6px; }
.tab > .snd { width: 16px; height: 15px; margin-left: 9px; }
.plus { width: 18px; height: 18px; margin-left: 24px; }
.winctl { margin-left: auto; display: flex; gap: 52.600px; padding: 0 26px 8px 0; }
.winctl svg { width: 16px; height: 16px; fill: none; stroke: #111; stroke-width: 1.200; }

/* address row */
.toolbar { flex: none; height: 63px; background: #fff; display: flex; align-items: center; padding-left: 21px; }
.tb { width: 24px; height: 24px; margin-right: 24px; }
.omni {
  width: 2123px;
  height: 51px;
  margin-left: -3px;
  border-radius: 26px;
  background: #f1f3f4;
  display: flex;
  align-items: center;
  padding-left: 21px;
}
.lock { width: 13px; height: 17px; }
.url { margin-left: 17px; flex: 1; font-size: 20px; color: #5f6368; }
.url b { font-weight: 400; color: #202124; letter-spacing: -0.24px; }
.omni .star { margin-right: 15px; }
.media { margin: 0 26px 0 21px; }
.panel { width: 22px; height: 22px; margin: 0 21px 0 0; }
.avatar { width: 33px; height: 33px; }
.dots { width: 6px; height: 22px; margin-left: 28px; }

/* bookmarks */
.bookmarks {
  flex: none;
  height: 50px;
  padding: 0 0 7px 21px;
  background: #fff;
  border-bottom: 2px solid #d8dade;
  display: grid;
  grid-template-columns: 117px 107px 127px 101px 222px 230px 112px 221px 220px 162px 117px 216px 229px 255px 20px;
  align-items: center;
  font-size: 17.5px;
  color: #3c4043;
}
.bm { display: flex; align-items: center; }
.bm svg { width: 24px; height: 24px; }
.bm span { margin-left: 12px; padding-top: 2px; font-feature-settings: "palt"; letter-spacing: -0.4px; }
.bm:nth-child(1) span { letter-spacing: -0.18px; }
.bm:nth-child(4) span { font-size: 16.5px; letter-spacing: -1px; }
.bm:nth-child(5) span { font-size: 17px; letter-spacing: -0.8px; font-feature-settings: normal; }
.bm:nth-child(6) span { font-size: 17px; letter-spacing: -1.07px; }
.bm:nth-child(7) span { font-size: 16px; letter-spacing: -1.6px; }
.bm:nth-child(10) span { font-size: 17px; letter-spacing: -1.27px; }
.bm:nth-child(12) span { letter-spacing: 0.1px; }
.bm:nth-child(13) span { letter-spacing: -0.8px; }
.bm:nth-child(14) span { font-size: 17px; letter-spacing: -1.4px; }
.more { font-size: 22px; line-height: 24px; }

/* console header */
.nav {
  flex: none;
  height: 61px;
  background: #232f3e;
  border-bottom: 1.500px solid #545b64;
  display: flex;
  align-items: center;
  color: #fff;
  font-size: 18px;
}
.logo { width: 100px; height: 34px; padding-left: 27px; border-right: 1px solid #414b59; }
.logo span { display: block; height: 19px; font: 600 23px/15px "Open Sans", sans-serif; letter-spacing: 0.3px; padding-left: 1px; }
.logo svg { width: 47px; height: 15px; }
.services { width: 158px; padding-left: 25px; display: flex; align-items: center; gap: 12px; }
.services svg { width: 24px; height: 24px; }
.search {
  width: 811px;
  height: 45px;
  padding: 0 16px;
  border: 1.500px solid #7b8791;
  border-radius: 3px;
  background: #161a21;
  display: flex;
  align-items: center;
  font-size: 21px;
  color: #95a5a6;
}
.search svg { width: 24px; height: 24px; margin-right: 12px; }
.search em { margin-left: auto; font-style: normal; letter-spacing: 0.4px; }
.navr { margin-left: auto; height: 34px; display: flex; }
.navr > div { display: flex; align-items: center; border-left: 1px solid #414b59; }
.navr svg { width: 24px; height: 24px; }
.navr .n1 { border: 0; width: 48px; }
.n2 { width: 76px; padding-left: 25px; }
.n3 { width: 73px; padding-left: 24px; }
.n4 { width: 110px; padding-left: 24px; }
.n5 { width: 402px; padding-left: 25px; letter-spacing: 0.15px; }
.tri { width: 0; height: 0; border: 6.500px solid transparent; border-top: 10px solid #fff; border-bottom: 0; margin-left: 9px; }

/* content */
main { flex: 1; padding: 0 60px; }
.crumbs { display: flex; align-items: center; height: 33px; margin-top: 38px; color: #0073bb; }
.crumbs svg { width: 14px; height: 24px; }
.c1 { width: 56px; }
.c2, .c3, .c4 { margin-left: 17px; }
.c2 { width: 146px; }
.c3 { width: 123px; }
.c4 { margin-left: 18px; color: #687078; font-weight: 700; }
h1 { margin-top: 26px; height: 60px; line-height: 60px; font-size: 42px; }
.card {
  width: 1200px;
  height: 976px;
  margin-top: 30px;
  padding: 22px 30px 0;
  background: #fff;
  box-shadow: 0 1.500px 1.500px 0 rgba(0,28,36,.5), 1.500px 1.500px 2px 0 rgba(0,28,36,.25), -1px 1px 1.500px 0 rgba(0,28,36,.2);
}
.ok { display: flex; align-items: center; height: 33px; color: #1d8102; }
.ok svg, li svg { width: 24px; height: 24px; }
.ok span { margin-left: 5px; }
h2 { display: flex; align-items: center; height: 43px; margin-top: 16px; padding: 0 0 0 7px; border-bottom: 1.500px solid #eaeded; font-size: 21px; font-weight: 700; color: #545b64; }
h2 .tri { border-width: 13px 8px 0; border-top-color: #545b64; margin: 0 12px 0 0; }
.c4, h2, button { font-family: "Noto Sans", "Noto Sans CJK JP", sans-serif; }
ul { list-style: none; padding: 7px 0 0 30px; }
li { display: flex; align-items: center; height: 39px; color: #1d8102; }
li .p { margin-left: 5px; }
li a { margin: 0 6px; color: #0073bb; }
li.tight a { letter-spacing: -0.07px; }
li.loose a { letter-spacing: 0.14px; }
.actions { width: 1200px; margin-top: 16px; display: flex; justify-content: flex-end; }
button { width: 173px; height: 44px; border: 0; border-radius: 3px; background: #f90; color: #16191f; font-size: 21px; line-height: 32px; font-weight: 700; letter-spacing: 0.35px; padding: 0 0 2px; }

/* console footer */
.foot { flex: none; height: 44px; background: #232f3e; border-top: 1px solid #545b64; display: flex; align-items: center; color: #fff; font-size: 18px; padding: 0 25px 2px 24px; }
.foot svg { width: 24px; height: 24px; margin-top: 2px; }
.f1 { margin-left: 8px; width: 126px; letter-spacing: -0.16px; }
.f2 { width: 163px; }
.f4 { margin-left: auto; width: 516px; letter-spacing: -0.17px; }
.f5 { width: 146px; }
.f6 { width: 73px; }
.f7 { width: 113px; letter-spacing: -0.25px; }

/* taskbar */
.taskbar {
  flex: none;
  height: 72px;
  border-top: 2px solid #b4c4a4;
  background: linear-gradient(90deg, #c9efdb 0, #cdf2d6 280px, #dbf6cb 440px, #e6f9c5 640px, #e1f9c2 900px, #e1f9c2 1560px, #ebfab9 1750px, #dbf5c6 1960px, #e4f8b2 2110px, #dcf5b9 2330px, #daf5c0 2496px);
  display: flex;
  align-items: center;
}
.weather { width: 666px; padding-left: 32px; display: flex; align-items: center; font-size: 18px; }
.weather svg { width: 34px; height: 34px; margin-right: 11px; }
.weather div { display: flex; flex-direction: column; line-height: 23.500px; }
.w1 { color: #1c1f1c; letter-spacing: -0.6px; }
.w2 { color: #56605a; font-size: 17px; font-feature-settings: "palt"; letter-spacing: -0.9px; }
.start { width: 35px; height: 35px; }
.tsearch { width: 326px; height: 46px; margin-left: 22px; border-radius: 23px; background: #f6fdea; box-shadow: 0 0 0 1px #d2e6b8, 0 2px 0 #b7cb9d; display: flex; align-items: center; padding: 0 6px 0 15px; }
.tsearch .mag { width: 24px; height: 24px; }
.tsearch span { margin-left: 16px; flex: 1; color: #5a5f55; font-size: 20px; }
.bing { width: 32px; height: 32px; }
.apps { margin-left: 5px; display: flex; }
.apps > div { position: relative; width: 66px; height: 70px; display: flex; justify-content: center; align-items: center; }
.apps svg { width: 36px; height: 36px; position: relative; }
.run::after, .cur::after { content: ""; position: absolute; left: 29px; bottom: 7px; width: 9px; height: 5px; border-radius: 3px; background: #7f8a70; }
.cur::after { left: 21px; width: 24px; background: #0078d4; }
.cur::before { content: ""; position: absolute; left: 5px; top: 6px; width: 56px; height: 56px; border-radius: 6px; background: #f1fbe2; box-shadow: 0 1px 2px rgba(0,0,0,.2); }
.tray { margin-left: auto; padding-right: 29px; display: flex; align-items: center; color: #222; }
.caret { width: 16px; height: 12px; }
.ime { margin-left: 28px; font-size: 22px; }
.wifi { width: 24px; height: 20px; margin-left: 26px; }
.vol { width: 24px; height: 20px; margin-left: 12px; }
.bat { width: 24px; height: 20px; margin-left: 12px; }
.clock { width: 116px; display: flex; flex-direction: column; align-items: flex-end; font-size: 18px; line-height: 23.500px; letter-spacing: -0.45px; }
```
